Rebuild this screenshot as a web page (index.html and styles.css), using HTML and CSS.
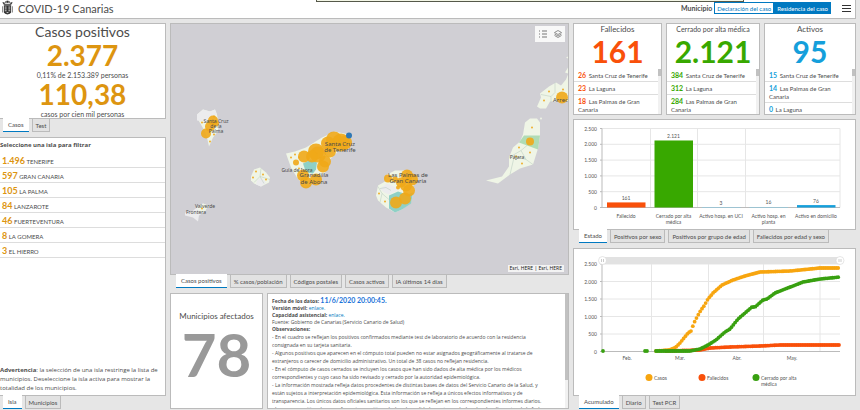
FILE: index.html
```html
<!DOCTYPE html>
<html lang="es">
<head>
  <meta charset="UTF-8">
  <title>COVID-19 Canarias</title>
  <link rel="stylesheet" href="styles.css">
</head>
<body>
  <header class="header">
    <svg class="logo" viewBox="0 0 12 16">
      <path d="M2 4L1 2l2 1 1-2 2 1 2-1 1 2 2-1-1 2z" fill="none" stroke="#333" stroke-width="1"/>
      <path d="M5 0h2v2H5z" fill="#333"/>
      <path d="M2 5h8v8q-1 2-4 2t-4-2z" fill="#333"/>
      <path d="M0 6h1v7H0zM11 6h1v7h-1z" fill="#888"/>
      <path d="M3 7h2M7 7h2M3 9h2M7 9h2M3 11h2M7 11h2M5 13h2" stroke="#ddd" stroke-width="1"/>
    </svg>
    <h1>COVID-19 Canarias</h1>
    <div class="capture-bar"></div>
    <span class="filter-label">Municipio</span>
    <div class="switch">
      <button type="button">Declaración del caso</button>
      <button type="button" class="on">Residencia del caso</button>
    </div>
    <button type="button" class="menu" aria-label="Menú"><span></span><span></span><span></span></button>
  </header>

  <main class="dashboard">
    <div class="column">
      <section class="panel totals">
        <h2>Casos positivos</h2>
        <p class="big">2.377</p>
        <p class="note">0,11% de 2.153.389 personas</p>
        <p class="big">110,38</p>
        <p class="note">casos por cien mil personas</p>
      </section>
      <nav class="tabs tabs-left">
        <button type="button" class="active">Casos</button>
        <button type="button">Test</button>
      </nav>
      <section class="panel islands">
        <h3>Seleccione una isla para filtrar</h3>
        <ul>
          <li><button type="button"><b>1.496</b> TENERIFE</button></li>
          <li><button type="button"><b>597</b> GRAN CANARIA</button></li>
          <li><button type="button"><b>105</b> LA PALMA</button></li>
          <li><button type="button"><b>84</b> LANZAROTE</button></li>
          <li><button type="button"><b>46</b> FUERTEVENTURA</button></li>
          <li><button type="button"><b>8</b> LA GOMERA</button></li>
          <li><button type="button"><b>3</b> EL HIERRO</button></li>
        </ul>
        <p class="warning"><b>Advertencia</b>: la selección de una isla restringe la lista de municipios. Deseleccione la isla activa para mostrar la totalidad de los municipios.</p>
      </section>
      <nav class="tabs tabs-left">
        <button type="button" class="active">Isla</button>
        <button type="button">Municipios</button>
      </nav>
    </div>

    <div class="column">
      <section class="panel map">
        <svg class="map-canvas" viewBox="171 24 397 251" preserveAspectRatio="xMidYMid slice">
          <!-- La Palma -->
          <path class="land" d="M197 115l6-5 7 2 5-2 2 5 2 12-2 6-4 5-4 9-2-9-2-6-7-12z"/>
          <path class="nodata" d="M197 115l6-5 7 2 5-2 2 5-6 3-6 4-8-1z"/>
          <g class="cases">
            <circle cx="206" cy="134" r="5"/><circle cx="210" cy="127" r="5"/><circle cx="213" cy="121" r="5"/>
            <circle cx="216" cy="124" r="3"/><circle cx="202" cy="123" r="1"/><circle cx="214" cy="117" r="1"/>
            <circle cx="214" cy="135" r="1"/><circle cx="210" cy="142" r="1"/>
          </g>
          <!-- La Gomera -->
          <path class="land" d="M251 177l3-7 6-2 6 5 4 5-1 5-8 4-7-3-3-3z"/>
          <path class="nodata" d="M257 181l4-3 5 5-5 4-5-2z"/>
          <path class="limit" d="M261 169l-1 8 10 3M260 177l-6 6M260 177l4 7"/>
          <g class="cases"><circle cx="256" cy="172" r="1"/><circle cx="263" cy="175" r="1"/><circle cx="253" cy="178" r="1"/><circle cx="266" cy="180" r="1"/></g>
          <!-- El Hierro -->
          <path class="nodata" d="M185 213l7-1 5-4 6-4 5 2-3 6-6 4-1 6-5-4-8-2z"/>
          <path class="land" d="M197 208l6-4 5 2-3 6-5 1z"/>
          <g class="cases"><circle cx="202" cy="209" r="1"/></g>
          <!-- Tenerife -->
          <path class="land" d="M286 154l9-2 11-4 16-10 13-6 14 3v5l-11 12-8 8-4 12-8 8-13 8-8-10-6-10z"/>
          <path class="mid" d="M303 164l8-4 6 3-1 7-3 4-7-1z"/>
          <g class="cases">
            <circle cx="334" cy="140" r="8"/><circle cx="341" cy="143" r="9"/><circle cx="345" cy="143" r="7"/>
            <circle cx="328" cy="144" r="7"/><circle cx="330" cy="152" r="6"/><circle cx="316" cy="152" r="8"/>
            <circle cx="318" cy="155" r="8"/><circle cx="312" cy="157" r="6"/><circle cx="304" cy="157" r="6"/>
            <circle cx="325" cy="162" r="6"/><circle cx="323" cy="167" r="6"/><circle cx="296" cy="163" r="3"/>
            <circle cx="303" cy="176" r="6"/><circle cx="306" cy="183" r="6"/><circle cx="316" cy="180" r="6"/>
            <circle cx="291" cy="158" r="1"/><circle cx="295" cy="155" r="1"/><circle cx="299" cy="158" r="1"/><circle cx="299" cy="169" r="1"/>
          </g>
          <circle cx="349" cy="136" r="3" fill="#2f78b5"/>
          <!-- Gran Canaria -->
          <path class="land" d="M376 196l2-10 7-4 2-7 8-4h10l8 7 1 12-3 13-9 7-7 3-9-5-8-7z"/>
          <path class="nodata" d="M380 189l7-5 9 4 2 3-9 4-5-2z"/>
          <path class="mid" d="M389 196l9-4 9 3 6-2-2 11-9 6-7 3-6-4z"/>
          <path class="limit" d="M378 187l4 7 7 6M382 194l-2 9M380 189l6-1 5 3"/>
          <g class="cases">
            <circle cx="407" cy="176" r="6"/><circle cx="412" cy="180" r="6"/><circle cx="388" cy="179" r="4"/>
            <circle cx="395" cy="180" r="3"/><circle cx="401" cy="183" r="5"/><circle cx="406" cy="186" r="6"/>
            <circle cx="409" cy="191" r="6"/><circle cx="405" cy="199" r="6"/><circle cx="396" cy="203" r="6"/>
            <circle cx="379" cy="194" r="1"/><circle cx="385" cy="202" r="1"/><circle cx="398" cy="188" r="2"/>
          </g>
          <!-- Fuerteventura -->
          <path class="land" d="M525 123l5-4h7l3 4v14l-2 12-5 16-13 4-10 6-12 9-12-3 16-4 7-10v-9l4-10 7-6 3-7z"/>
          <path class="low" d="M524 136h16l-2 14-11-4-8-3z"/>
          <path class="limit" d="M509 158l12-7 6-5M516 157l10 3 7 5M514 158l-4 17M521 151l5 9"/>
          <circle class="land" cx="541" cy="119" r="1"/>
          <g class="cases"><circle cx="530" cy="142" r="4"/><circle cx="532" cy="128" r="1"/><circle cx="519" cy="148" r="1"/><circle cx="530" cy="153" r="1"/><circle cx="522" cy="164" r="1"/><circle cx="516" cy="157" r="1"/></g>
          <!-- Lanzarote -->
          <path class="land" d="M537 107l4-9-1-4 9-7 7-4 5 3 5-6 2-5v27h-18l-4 7h-6z"/>
          <path class="land" d="M565 73l3-5v6zM566 58l2-1v2z"/>
          <path class="limit" d="M541 95l10 2 4-4V83M551 97v6"/>
          <g class="cases"><circle cx="562" cy="98" r="6"/><circle cx="549" cy="92" r="1"/><circle cx="563" cy="90" r="1"/><circle cx="544" cy="101" r="1"/></g>
          <g class="places">
            <text x="216" y="123">Santa Cruz</text><text x="216" y="128">de la</text><text x="216" y="133">Palma</text>
            <text x="205" y="208">Valverde</text><text x="196" y="214">Frontera</text>
            <text x="297" y="172">Guía de Isora</text>
            <text x="517" y="159">Pájara</text><text x="564" y="102" class="town">Arrecife</text>
            <text x="340" y="146" class="town">Santa Cruz</text><text x="340" y="152" class="town">de Tenerife</text>
            <text x="314" y="177" class="town">Granadilla</text><text x="314" y="184" class="town">de Abona</text>
            <text x="408" y="177" class="town">Las Palmas de</text><text x="408" y="183" class="town">Gran Canaria</text>
          </g>
        </svg>
        <div class="map-tools">
          <button type="button" aria-label="Leyenda">
            <svg viewBox="0 0 8 8"><path d="M0 1h1M0 4h1M0 7h1M3 1h5M3 4h5M3 7h5" stroke="#777"/></svg>
          </button>
          <button type="button" aria-label="Capas">
            <svg viewBox="0 0 8 8"><path d="M4 .5l3.500 2-3.500 2-3.500-2zM.5 4L4 6l3.500-2M.5 5.500l3.500 2 3.500-2" fill="none" stroke="#777" stroke-width=".8"/></svg>
          </button>
        </div>
        <span class="credits">Esri, HERE | Esri, HERE</span>
      </section>
      <nav class="tabs">
        <button type="button" class="active">Casos positivos</button>
        <button type="button">% casos/población</button>
        <button type="button">Códigos postales</button>
        <button type="button">Casos activos</button>
        <button type="button">IA últimos 14 días</button>
      </nav>
      <div class="bottom">
        <section class="panel towns">
          <h3>Municipios afectados</h3>
          <p>78</p>
        </section>
        <section class="panel info">
          <div class="info-text">
            <div class="info-head">
              <p><b>Fecha de los datos: <span class="date">11/6/2020 20:00:45.</span></b></p>
              <p><b>Versión móvil:</b> <a href="#">enlace.</a></p>
              <p><b>Capacidad asistencial:</b> <a href="#">enlace.</a></p>
              <p>Fuente: Gobierno de Canarias (Servicio Canario de Salud)</p>
              <p><b>Observaciones:</b></p>
            </div>
            <p>- En el cuadro se reflejan los positivos confirmados mediante test de laboratorio de acuerdo con la residencia<br>consignada en su tarjeta sanitaria.</p>
            <p>- Algunos positivos que aparecen en el cómputo total pueden no estar asignados geográficamente al tratarse de<br>extranjeros o carecer de domicilio administrativo. Un total de 38 casos no reflejan residencia.</p>
            <p>- En el cómputo de casos cerrados se incluyen los casos que han sido dados de alta médica por los médicos<br>correspondientes y cuyo caso ha sido revisado y cerrado por la autoridad epidemiológica.</p>
            <p>- La información mostrada refleja datos procedentes de distintas bases de datos del Servicio Canario de la Salud, y<br>están sujetos a interpretación epidemiológica. Esta información se refleja a únicos efectos informativos y de<br>transparencia. Los únicos datos oficiales sanitarios son los que se reflejan en los correspondientes informes diarios.</p>
            <p>- Los casos positivos hacen referencia a positivos declarados validados, esto es, declarados dos días antes de la fecha</p>
          </div>
          <div class="rail"><span></span></div>
        </section>
      </div>
    </div>

    <div class="column">
      <div class="indicators">
        <section class="panel indicator red">
          <h3>Fallecidos</h3>
          <p class="value">161</p>
          <div class="scroll">
            <ul>
              <li><b>26</b> Santa Cruz de Tenerife</li>
              <li><b>23</b> La Laguna</li>
              <li><b>18</b> Las Palmas de Gran Canaria</li>
            </ul>
            <div class="rail short"><span></span></div>
          </div>
        </section>
        <section class="panel indicator green">
          <h3>Cerrado por alta médica</h3>
          <p class="value">2.121</p>
          <div class="scroll">
            <ul>
              <li><b>384</b> Santa Cruz de Tenerife</li>
              <li><b>312</b> La Laguna</li>
              <li><b>284</b> Las Palmas de Gran Canaria</li>
            </ul>
            <div class="rail short"><span></span></div>
          </div>
        </section>
        <section class="panel indicator blue">
          <h3>Activos</h3>
          <p class="value">95</p>
          <div class="scroll">
            <ul>
              <li><b>15</b> Santa Cruz de Tenerife</li>
              <li><b>14</b> Las Palmas de Gran Canaria</li>
              <li><b>0</b> La Laguna</li>
            </ul>
            <div class="rail short"><span></span></div>
          </div>
        </section>
      </div>
      <section class="panel chart-status">
        <svg id="statusChart" class="chart" viewBox="574 120 281 109"></svg>
      </section>
      <nav class="tabs">
        <button type="button" class="active">Estado</button>
        <button type="button">Positivos por sexo</button>
        <button type="button">Positivos por grupo de edad</button>
        <button type="button">Fallecidos por edad y sexo</button>
      </nav>
      <section class="panel chart-time">
        <svg id="timeChart" class="chart" viewBox="574 249 281 146"></svg>
      </section>
      <nav class="tabs">
        <button type="button" class="active">Acumulado</button>
        <button type="button">Diario</button>
        <button type="button">Test PCR</button>
      </nav>
    </div>
  </main>

  <script src="charts.js"></script>
</body>
</html>
```

FILE: styles.css
```css
* {
  box-sizing: border-box;
}
body {
  margin: 0;
  height: 100vh;
  display: flex;
  flex-direction: column;
  padding-right: 4px;
  background: #e6e6e6;
  color: #4c4c4c;
  font-family: Lato, "Open Sans", sans-serif;
  font-size: 7px;
  overflow: hidden;
}
h1, h2, h3, p, ul {
  margin: 0;
  padding: 0;
  font-weight: normal;
}
ul {
  list-style: none;
}
button {
  font-family: inherit;
  color: inherit;
  border: none;
  padding: 0;
  background: none;
  cursor: pointer;
}

/* header */
.header {
  position: relative;
  display: flex;
  align-items: center;
  height: 19px;
  padding: 0 4px 2px 2px;
  background: white;
  border-bottom: 1px solid #bbb;
  border-right: 1px solid #bbb;
}
.logo {
  width: 11px;
  height: 16px;
}
.header h1 {
  margin-left: 5px;
  font-size: 11px;
}
.capture-bar {
  position: absolute;
  top: 0;
  left: 37%;
  right: 13%;
  height: 2px;
  background: #f3f6e6;
  border: 1px solid #56594a;
  border-top: none;
}
.filter-label {
  margin-left: auto;
  font-weight: bold;
}
.switch {
  display: flex;
  margin: 0 11px 0 2px;
}
.switch button {
  height: 12px;
  padding: 0 2px;
  border: 1px solid #0079c1;
  font-size: 6px;
  color: #0079c1;
}
.switch .on {
  background: #0079c1;
  color: white;
}
.menu {
  display: grid;
  gap: 2px;
  width: 9px;
}
.menu span {
  height: 1px;
  background: #333;
}

/* layout */
.dashboard {
  flex: 1;
  min-height: 0;
  display: grid;
  grid-template-columns: 166fr 399fr 283fr;
  gap: 4px;
  padding: 4px 0 1px;
}
.column {
  display: flex;
  flex-direction: column;
  min-width: 0;
  min-height: 0;
}
.panel {
  background: white;
  border: 1px solid #bbb;
  min-width: 0;
  min-height: 0;
  overflow: hidden;
}
.tabs {
  display: flex;
  gap: 3px;
  height: 13px;
  padding-left: 6px;
  margin-bottom: 5px;
  flex: none;
}
.tabs-left {
  padding-left: 3px;
}
.tabs:last-child {
  margin-bottom: 0;
}
.tabs button {
  padding: 0 3px;
  border: 1px solid #bbb;
  border-top: none;
  background: #e2e2e2;
  font-size: 6px;
  white-space: nowrap;
}
.tabs .active {
  position: relative;
  top: -1px;
  height: 14px;
  background: white;
  border: none;
  border-bottom: 1px solid #0079c1;
  padding: 0 5px;
}

/* left column */
.totals {
  height: 96px;
  flex: none;
  border-left: none;
  text-align: center;
}
.totals h2 {
  font-size: 14px;
  line-height: 16px;
}
.big {
  font-size: 28px;
  line-height: 31px;
  font-weight: bold;
  color: #dd9510;
}
.note {
  font-size: 7px;
  line-height: 8px;
}
.islands {
  flex: 1;
  display: flex;
  flex-direction: column;
  border-left: none;
}
.islands h3 {
  font-family: "Open Sans", sans-serif;
  font-size: 6px;
  line-height: 15px;
  font-weight: bold;
}
.islands li {
  height: 15px;
  border-bottom: 1px solid #ddd;
}
.islands button {
  width: 100%;
  height: 14px;
  padding-left: 2px;
  font-size: 6px;
  text-align: left;
}
.islands button b {
  font-size: 9px;
  color: #dd9510;
}
.warning {
  margin-top: auto;
  padding-bottom: 2px;
  font-family: "Open Sans", sans-serif;
  font-size: 6px;
  line-height: 9px;
}

/* map */
.map {
  position: relative;
  flex: 1;
  background: #d0cfd4;
}
.map-canvas {
  display: block;
  width: 100%;
  height: 100%;
}
.land { fill: #eff5e6; }
.nodata { fill: #ececee; }
.low { fill: #b0dcb5; }
.mid { fill: #8fd0c6; }
.limit {
  fill: none;
  stroke: #b5c9bd;
  stroke-width: .5;
}
.cases {
  fill: #f0a818;
  fill-opacity: .9;
}
.places text {
  font-family: "Noto Sans", sans-serif;
  font-size: 5px;
  fill: #4a4a4a;
  text-anchor: middle;
}
.places .town {
  font-size: 6px;
}
.map-tools {
  position: absolute;
  top: 2px;
  right: 3px;
  display: flex;
  background: #f8f8f8;
}
.map-tools button {
  display: flex;
  align-items: center;
  justify-content: center;
  width: 15px;
  height: 16px;
}
.map-tools svg {
  width: 8px;
  height: 8px;
}
.credits {
  position: absolute;
  right: 4px;
  bottom: 2px;
  padding: 0 2px;
  background: #f3f3f3;
  font-family: "Noto Sans", sans-serif;
  font-size: 5px;
  line-height: 7px;
  color: #222;
}

/* bottom of the middle column */
.bottom {
  display: grid;
  grid-template-columns: 93fr 302fr;
  gap: 4px;
  height: 116px;
  flex: none;
}
.towns {
  text-align: center;
  padding-top: 16px;
}
.towns h3 {
  font-size: 8px;
  line-height: 12px;
  white-space: nowrap;
}
.towns p {
  font-size: 60px;
  line-height: 64px;
  font-weight: bold;
  color: #999;
}
.info {
  display: flex;
}
.info-text {
  flex: 1;
  padding: 3px 4px 0;
  font-family: "Open Sans", sans-serif;
  font-size: 5px;
  line-height: 8px;
  white-space: nowrap;
  min-width: 0;
}
.info-head {
  line-height: 7px;
}
.info-text a {
  color: #0079c1;
  text-decoration: none;
}
.info-text .date {
  font-family: Lato, sans-serif;
  font-size: 7px;
  line-height: 1;
  color: #1a73d9;
}
.rail {
  width: 3px;
  flex: none;
  background: #f1f1f1;
}
.rail span {
  display: block;
  height: 75%;
  background: #c1c1c1;
}
.rail.short span {
  height: 7px;
}

/* right column */
.indicators {
  display: grid;
  grid-template-columns: 89fr 94fr 92fr;
  gap: 4px;
  height: 92px;
  margin-bottom: 4px;
  flex: none;
}
.indicator {
  display: flex;
  flex-direction: column;
}
.indicator h3 {
  font-size: 8px;
  line-height: 10px;
  text-align: center;
  white-space: nowrap;
  flex: none;
}
.green h3 {
  font-size: 7px;
}
.value {
  font-size: 30px;
  line-height: 35px;
  font-weight: bold;
  text-align: center;
}
.scroll {
  flex: 1;
  display: flex;
  min-height: 0;
}
.scroll ul {
  flex: 1;
}
.scroll li {
  padding: 3px 4px 1px;
  line-height: 8px;
  font-size: 6px;
  border-bottom: 1px solid #ddd;
}
.scroll li:last-child {
  border-bottom: none;
}
.scroll b {
  font-size: 7px;
  line-height: 1;
  margin-right: 1px;
}
.red .value, .red b { color: #f9500a; }
.green .value, .green b { color: #38a800; }
.blue .value, .blue b { color: #159fdb; }

/* charts */
.chart-status {
  height: 111px;
  flex: none;
}
.chart-time {
  flex: 1;
}
.chart {
  display: block;
  width: 100%;
  height: 100%;
}
.chart text {
  font-size: 5px;
  fill: #555;
}
.chart .middle { text-anchor: middle; }
.chart .end { text-anchor: end; }
.grid { stroke: #e6e6e6; }
.axis { stroke: #bbb; }
```

FILE: charts.js
```javascript
const NS = 'http://www.w3.org/2000/svg';

function add(svg, tag, attrs, text) {
  const el = document.createElementNS(NS, tag);
  for (const key in attrs) el.setAttribute(key, attrs[key]);
  if (text) el.textContent = text;
  svg.appendChild(el);
}

function drawAxes(svg, top, bottom, columns) {
  const left = 602, right = 840;
  ['2.500', '2.000', '1.500', '1.000', '500', '0'].forEach((label, i) => {
    const y = top + (bottom - top) * i / 5;
    add(svg, 'line', { x1: left, x2: right, y1: y, y2: y, class: 'grid' });
    add(svg, 'line', { x1: left - 2, x2: left, y1: y, y2: y, class: 'axis' });
    add(svg, 'text', { x: left - 5, y: y + 2, class: 'end' }, label);
  });
  columns.forEach(x => add(svg, 'line', { x1: x, x2: x, y1: top, y2: bottom, class: 'grid' }));
  add(svg, 'line', { x1: left, x2: left, y1: top, y2: bottom, class: 'axis' });
  add(svg, 'line', { x1: left, x2: right, y1: bottom, y2: bottom, class: 'axis' });
}

// cases by status
const status = document.getElementById('statusChart');
drawAxes(status, 128.5, 207.5, [650.5, 697.5, 745.5, 840]);
[
  ['161', 161, '#f9500a', ['Fallecido']],
  ['2.121', 2121, '#38a800', ['Cerrado por alta', 'médica']],
  ['3', 3, '#7fcbe8', ['Activo hosp. en UCI']],
  ['16', 16, '#7fcbe8', ['Activo hosp. en', 'planta']],
  ['76', 76, '#159fdb', ['Activo en domicilio']]
].forEach(([label, value, color, names], i) => {
  const center = 626 + i * 47.5;
  const height = Math.max(value / 2500 * 79, 0.5);
  add(status, 'rect', { x: center - 19, y: 207.5 - height, width: 38.5, height: height, fill: color });
  add(status, 'text', { x: center, y: 205 - height, class: 'middle' }, label);
  names.forEach((name, n) => add(status, 'text', { x: center, y: 218 + n * 6, class: 'middle' }, name));
});

// accumulated cases
const time = document.getElementById('timeChart');
drawAxes(time, 264, 351.5, [651.5, 708.5, 763.5, 820]);
add(time, 'rect', { x: 602, y: 257, width: 238, height: 7, fill: '#e2e2e2' });
[602.5, 840].forEach(x => {
  add(time, 'circle', { cx: x, cy: 260.5, r: 4, fill: 'white', stroke: '#ccc', 'stroke-width': 0.5 });
  add(time, 'path', { d: `M${x - 1} 259v3M${x + 1} 259v3`, stroke: '#999', 'stroke-width': 0.5 });
});

function plot(points, color) {
  const step = 1.84;
  let p = 0;
  for (let x = points[0][0]; x <= 840; x += step) {
    while (p < points.length - 2 && x > points[p + 1][0]) p++;
    const [x1, y1] = points[p];
    const [x2, y2] = points[p + 1];
    const y = y1 + (y2 - y1) * (x - x1) / (x2 - x1);
    add(time, 'circle', { cx: x, cy: y, r: 1.9, fill: color });
  }
}
plot([[656, 351], [668, 350], [672, 349], [676, 347], [680, 343], [684, 338], [688, 333], [691, 331], [694, 323], [697, 317],
  [701, 310], [704, 306], [708, 299], [713, 293], [722, 285], [733, 280], [745, 276], [760, 272], [790, 271], [820, 268], [840, 268]], '#f7a50f');
plot([[666, 351], [700, 350], [710, 348], [730, 347], [760, 346], [780, 345], [840, 345]], '#f9500a');
plot([[656, 351], [690, 351], [700, 349], [708, 345], [716, 340], [725, 332], [730, 329], [738, 319], [745, 313], [752, 307],
  [755, 307], [763, 300], [767, 299], [775, 293], [785, 289], [793, 286], [803, 282], [820, 279], [840, 277]], '#38a010');
[603, 645, 647].forEach(x => add(time, 'circle', { cx: x, cy: 351, r: 1.9, fill: '#38a010' }));

[['Feb.', 627], ['Mar.', 680], ['Abr.', 737], ['May.', 792]].forEach(([name, x]) => add(time, 'text', { x: x, y: 360, class: 'middle' }, name));
[['Casos', 649, '#f7a50f'], ['Fallecidos', 702, '#f9500a'], ['Cerrado por alta', 756, '#38a010']].forEach(([name, x, color]) => {
  add(time, 'circle', { cx: x, cy: 377.5, r: 3.5, fill: color });
  add(time, 'text', { x: x + 5, y: 380 }, name);
});
add(time, 'text', { x: 761, y: 386 }, 'médica');
```
